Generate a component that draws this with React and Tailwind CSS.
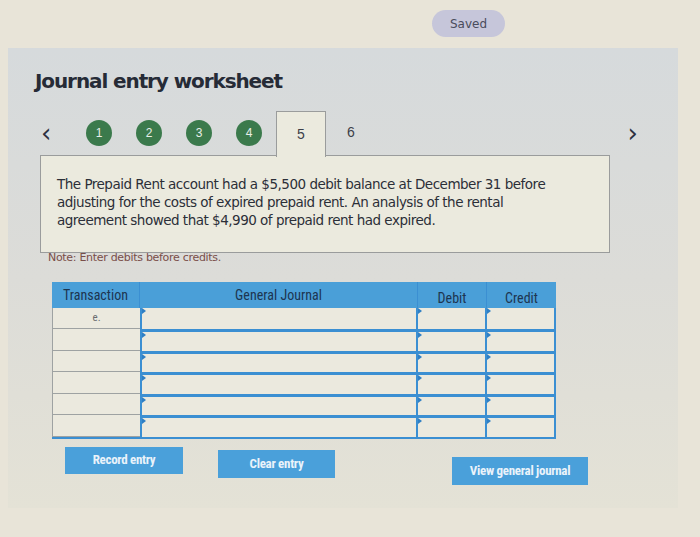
const steps = [1, 2, 3, 4];
const rows = ["e.", "", "", "", "", ""];

function Cell({ className = "", marker = true, children }) {
  return (
    <div className={`relative border-[#3b8fd2] bg-[#ebe9de] ${className}`}>
      {marker && (
        <span className="absolute left-0 top-0 h-0 w-0 border-y-[3px] border-l-[4px] border-y-transparent border-l-[#2f7fc4]" />
      )}
      {children}
    </div>
  );
}

export default function App() {
  return (
    <div
      className="h-[537px] w-[700px] overflow-hidden bg-[#e8e4d8] text-[#2b2f38]"
      style={{ fontFamily: "'DejaVu Sans', Verdana, sans-serif" }}
    >
      <div className="flex h-[48px] items-start pl-[432px] pt-[10px]">
        <div className="flex h-[27px] w-[73px] items-center justify-center rounded-full bg-[#c6c6da] text-[12px] text-[#4a4c5c]">
          Saved
        </div>
      </div>

      <div className="ml-[8px] h-[460px] w-[670px] bg-gradient-to-b from-[#d6dadc] via-[#dcdcd8] to-[#e4e2d6] pl-[27px] pt-[20px]">
        <h1 className="text-[20px] font-bold leading-[26px] tracking-[-1.1px] text-[#262b36]">
          Journal entry worksheet
        </h1>

        <div className="mt-[16px] flex h-[45px] items-center">
          <span className="ml-[6px] w-[45px] text-[26px] leading-none text-[#2d3040]">‹</span>
          <div className="flex gap-[24px]">
            {steps.map((s) => (
              <div
                key={s}
                className="flex h-[26px] w-[26px] items-center justify-center rounded-full bg-[#3b7a4c] text-[12px] text-[#e8efe8]"
                style={{ fontFamily: "'Liberation Sans', Arial, sans-serif" }}
              >
                {s}
              </div>
            ))}
          </div>
          <div
            className="relative z-10 ml-[14px] flex h-[46px] w-[50px] translate-y-[1px] items-center justify-center border border-b-0 border-[#9a9c9c] bg-[#ebeade] text-[14px] text-[#3c3f48]"
            style={{ fontFamily: "'Liberation Sans', Arial, sans-serif" }}
          >
            5
          </div>
          <span
            className="ml-[21px] text-[14px] text-[#3c3f48]"
            style={{ fontFamily: "'Liberation Sans', Arial, sans-serif" }}
          >
            6
          </span>
          <span className="ml-auto mr-[40px] text-[26px] leading-none text-[#2d3040]">›</span>
        </div>

        <div className="ml-[5px] h-[98px] w-[570px] border border-[#9a9c9c] bg-[#ebeade] px-[16px] pt-[19px]">
          <p className="text-[13.5px] leading-[18px] tracking-[-0.5px] text-[#2b2f38]">
            The Prepaid Rent account had a $5,500 debit balance at December 31 before
            <br />
            adjusting for the costs of expired prepaid rent. An analysis of the rental
            <br />
            agreement showed that $4,990 of prepaid rent had expired.
          </p>
        </div>

        <p className="ml-[13px] mt-[-3px] text-[11px] tracking-[-0.3px] text-[#7a4e48]">
          Note: Enter debits before credits.
        </p>

        <div
          className="ml-[17px] mt-[15px] w-[504px]"
          style={{ fontFamily: "'Liberation Sans Narrow', 'Roboto Condensed', Roboto, sans-serif" }}
        >
          <div className="grid h-[26px] grid-cols-[88px_278px_69px_69px] bg-[#4a9fd8] text-[14px] text-[#1d3550]">
            <div className="flex items-center justify-center border-r border-[#3b8fd2]">Transaction</div>
            <div className="flex items-center justify-center border-r border-[#3b8fd2]">General Journal</div>
            <div className="flex items-center justify-center border-r border-[#3b8fd2] pt-[6px]">Debit</div>
            <div className="flex items-center justify-center pt-[6px]">Credit</div>
          </div>
          <div className="border-b-2 border-[#3b8fd2]">
            {rows.map((r, i) => (
              <div key={i} className="grid h-[21.5px] grid-cols-[88px_278px_69px_69px]">
                <div className="flex items-center justify-center border-b border-l border-[#9ea2a2] bg-[#ebe9de] text-[11px] text-[#6a6d70]">
                  {r}
                </div>
                <Cell className={`border-x-2 ${i > 0 ? "border-t-[3px]" : ""}`} />
                <Cell className={`border-r-2 ${i > 0 ? "border-t-[3px]" : ""}`} />
                <Cell className={`border-r-2 ${i > 0 ? "border-t-[3px]" : ""}`} />
              </div>
            ))}
          </div>
        </div>

        <div
          className="mt-[8px] flex items-start text-[13px] font-bold text-[#eaf3fa]"
          style={{ fontFamily: "'Liberation Sans Narrow', 'Roboto Condensed', Roboto, sans-serif" }}
        >
          <button className="ml-[30px] flex h-[27px] w-[118px] items-center justify-center bg-[#4aa0da] tracking-[-0.3px]">
            Record entry
          </button>
          <button className="ml-[35px] mt-[3px] flex h-[28px] w-[117px] items-center justify-center bg-[#4aa0da] tracking-[-0.3px]">
            Clear entry
          </button>
          <button className="ml-[117px] mt-[10px] flex h-[28px] w-[136px] items-center justify-center bg-[#4aa0da] tracking-[-0.3px]">
            View general journal
          </button>
        </div>
      </div>
    </div>
  );
}
